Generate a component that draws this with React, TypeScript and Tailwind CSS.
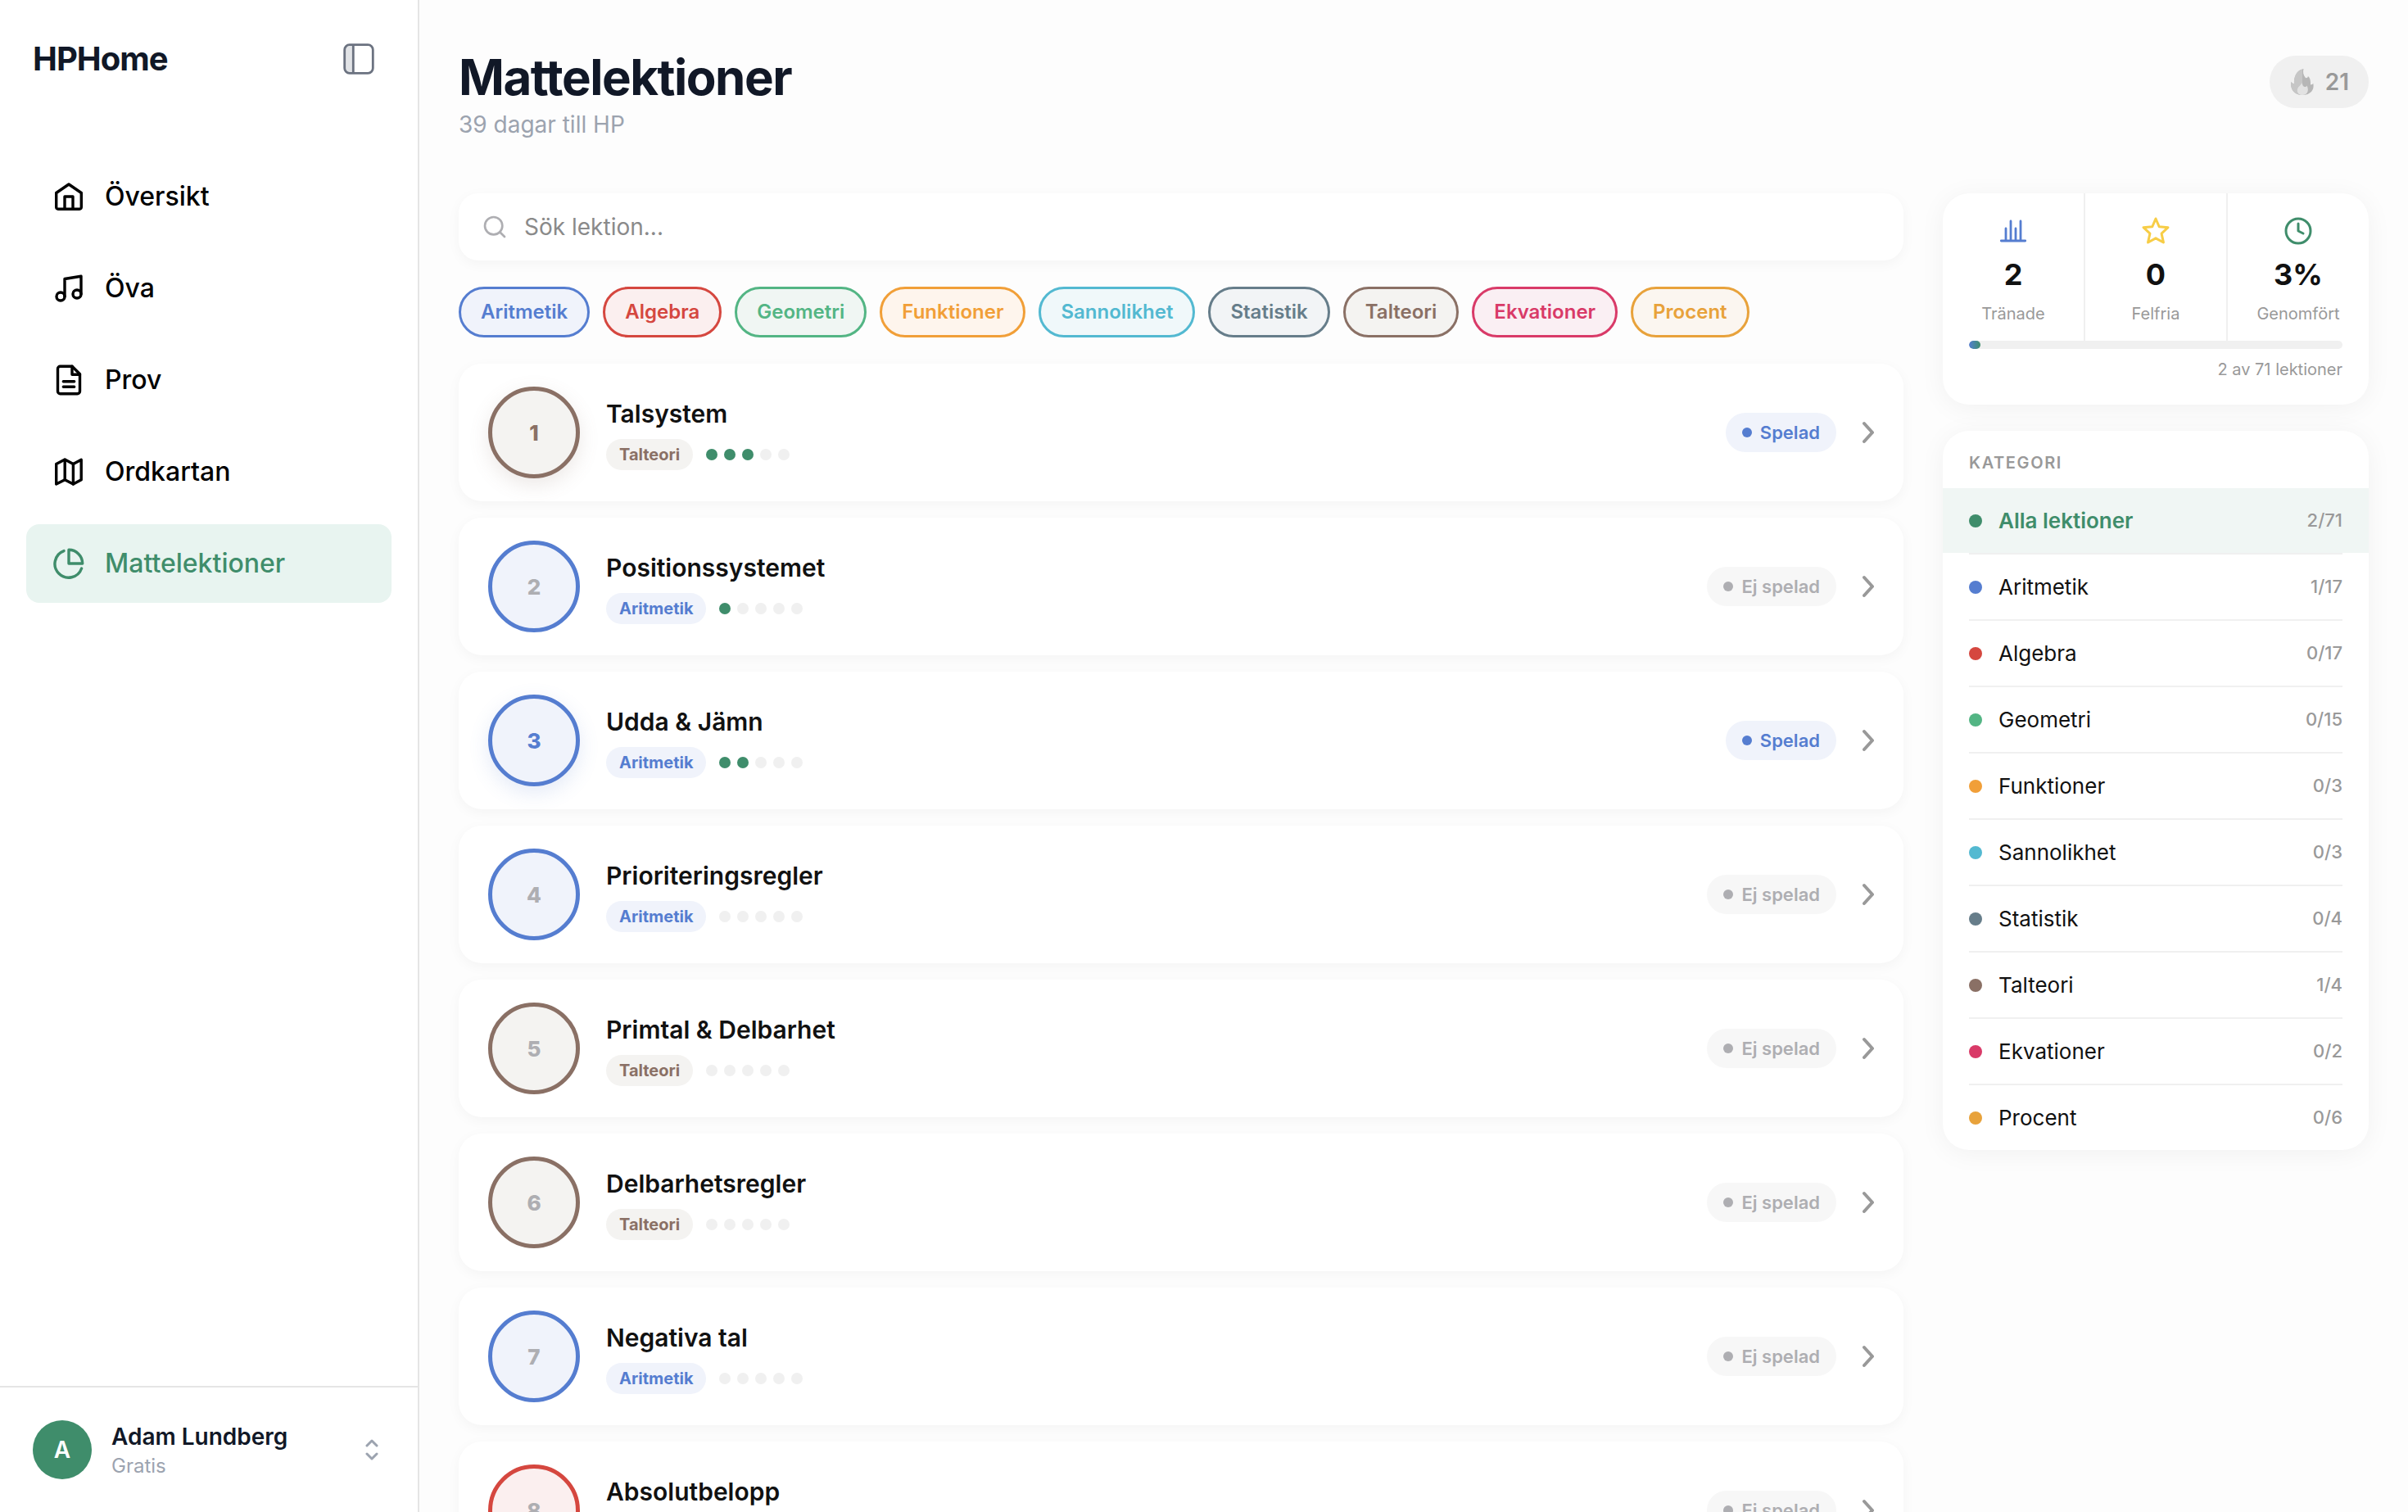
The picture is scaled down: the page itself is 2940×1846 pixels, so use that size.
import { ReactNode, useState } from 'react';
import { clsx } from 'clsx';
import { Clock, Search } from 'lucide-react';

const categoryStyles = {
  Aritmetik: {
    text: 'text-[#557dd0]',
    border: 'border-[#557dd0]',
    soft: 'bg-[#f0f3fb]',
    dot: 'bg-[#557dd0]',
    glow: 'shadow-[0_8px_24px_rgba(85,125,208,0.16)]',
  },
  Algebra: {
    text: 'text-[#d5473f]',
    border: 'border-[#d5473f]',
    soft: 'bg-[#fbefef]',
    dot: 'bg-[#d5473f]',
    glow: 'shadow-[0_8px_24px_rgba(213,71,63,0.16)]',
  },
  Geometri: {
    text: 'text-[#53b584]',
    border: 'border-[#53b584]',
    soft: 'bg-[#f0f6f3]',
    dot: 'bg-[#53b584]',
    glow: 'shadow-[0_8px_24px_rgba(83,181,132,0.16)]',
  },
  Funktioner: {
    text: 'text-[#f19f38]',
    border: 'border-[#f19f38]',
    soft: 'bg-[#fef5ed]',
    dot: 'bg-[#f19f38]',
    glow: 'shadow-[0_8px_24px_rgba(241,159,56,0.16)]',
  },
  Sannolikhet: {
    text: 'text-[#53b9d1]',
    border: 'border-[#53b9d1]',
    soft: 'bg-[#f0f8fa]',
    dot: 'bg-[#53b9d1]',
    glow: 'shadow-[0_8px_24px_rgba(83,185,209,0.16)]',
  },
  Statistik: {
    text: 'text-[#667d8a]',
    border: 'border-[#667d8a]',
    soft: 'bg-[#f2f4f6]',
    dot: 'bg-[#667d8a]',
    glow: 'shadow-[0_8px_24px_rgba(102,125,138,0.16)]',
  },
  Talteori: {
    text: 'text-[#8a7065]',
    border: 'border-[#8a7065]',
    soft: 'bg-[#f4f3f1]',
    dot: 'bg-[#8a7065]',
    glow: 'shadow-[0_8px_24px_rgba(138,112,101,0.16)]',
  },
  Ekvationer: {
    text: 'text-[#d93a68]',
    border: 'border-[#d93a68]',
    soft: 'bg-[#faeff3]',
    dot: 'bg-[#d93a68]',
    glow: 'shadow-[0_8px_24px_rgba(217,58,104,0.16)]',
  },
  Procent: {
    text: 'text-[#e8a23b]',
    border: 'border-[#e8a23b]',
    soft: 'bg-[#fbf6f0]',
    dot: 'bg-[#e8a23b]',
    glow: 'shadow-[0_8px_24px_rgba(232,162,59,0.16)]',
  },
};

type Category = keyof typeof categoryStyles;

const categories = Object.keys(categoryStyles) as Category[];

const counts: Record<Category, string> = {
  Aritmetik: '1/17',
  Algebra: '0/17',
  Geometri: '0/15',
  Funktioner: '0/3',
  Sannolikhet: '0/3',
  Statistik: '0/4',
  Talteori: '1/4',
  Ekvationer: '0/2',
  Procent: '0/6',
};

interface Lesson {
  id: number;
  title: string;
  category: Category;
  level: number;
  played: boolean;
}

const lessons: Lesson[] = [
  { id: 1, title: 'Talsystem', category: 'Talteori', level: 3, played: true },
  { id: 2, title: 'Positionssystemet', category: 'Aritmetik', level: 1, played: false },
  { id: 3, title: 'Udda & Jämn', category: 'Aritmetik', level: 2, played: true },
  { id: 4, title: 'Prioriteringsregler', category: 'Aritmetik', level: 0, played: false },
  { id: 5, title: 'Primtal & Delbarhet', category: 'Talteori', level: 0, played: false },
  { id: 6, title: 'Delbarhetsregler', category: 'Talteori', level: 0, played: false },
  { id: 7, title: 'Negativa tal', category: 'Aritmetik', level: 0, played: false },
  { id: 8, title: 'Absolutbelopp', category: 'Algebra', level: 0, played: false },
];

const NavIcon = ({ children }: { children: ReactNode }) => (
  <svg
    className="size-10"
    viewBox="0 0 40 40"
    fill="none"
    stroke="currentColor"
    strokeWidth="3.4"
    strokeLinecap="round"
    strokeLinejoin="round"
    aria-hidden="true"
  >
    {children}
  </svg>
);

const navItems = [
  {
    label: 'Översikt',
    icon: (
      <NavIcon>
        <path d="M4.7 15.5 20 5l15.3 10.5V33a2.2 2.2 0 0 1-2.2 2.2H6.9A2.2 2.2 0 0 1 4.7 33z" />
        <path d="M15 35V20h10v15" />
      </NavIcon>
    ),
  },
  {
    label: 'Öva',
    icon: (
      <NavIcon>
        <path d="M15 30V8.5l20-3.2V27" />
        <circle cx="10" cy="30" r="5" />
        <circle cx="30" cy="27" r="5" />
      </NavIcon>
    ),
  },
  {
    label: 'Prov',
    icon: (
      <NavIcon>
        <path d="M24 3.3H9.5a3 3 0 0 0-3 3v27.4a3 3 0 0 0 3 3h21a3 3 0 0 0 3-3V12.8z" />
        <path d="M24 3.3v10h9.5" />
        <path d="M13.3 21.7h13.4M13.3 28.3h13.4" />
      </NavIcon>
    ),
  },
  {
    label: 'Ordkartan',
    icon: (
      <NavIcon>
        <path d="m4.7 10.5 10.5-5.4 10.2 5.4 9.8-5.2v24.4l-9.8 5.3-10.2-5.3-10.5 5.3z" />
        <path d="M15.2 5.2v24.5M25.4 10.5V35" />
      </NavIcon>
    ),
  },
  {
    label: 'Mattelektioner',
    icon: (
      <NavIcon>
        <path d="M14 4.6A16.8 16.8 0 1 0 35.6 26" />
        <path d="M36.7 20A16.7 16.7 0 0 0 20 3.3V20z" />
      </NavIcon>
    ),
  },
];

const PanelIcon = () => (
  <svg className="size-10" viewBox="0 0 40 40" fill="none" stroke="currentColor" strokeWidth="2.8" aria-hidden="true">
    <path d="M14 3H8.500A6 6 0 0 0 3 9v22a6 6 0 0 0 5.500 6H14z" fill="currentColor" fillOpacity="0.2" stroke="none" />
    <rect x="2.700" y="2.700" width="34.600" height="34.600" rx="6" />
    <path d="M13.300 2.700v34.600" />
  </svg>
);

const FlameIcon = () => (
  <svg className="size-8" viewBox="0 0 32 32" aria-hidden="true">
    <path
      d="M17.500 0c-1 4-.5 7 2 10.500 1.200 1.600 3 .5 3.500-1.500 2.500 2 3.300 6 3 10.500 1.500 0 2.500-.8 3.300-1.700C31 26 26 32 16 32 6 32 1 25 2.300 15.800c.8 1.500 2 2.400 3.700 2.700C5.500 10 9 1.500 17.500 0z"
      fill="#b6b6b6"
    />
    <path d="M16 .6V32C6 32 1 25 2.300 15.800c.8 1.500 2 2.400 3.700 2.700C5.500 10 8.500 2.500 16 .6z" fill="#c6c6c6" />
    <path d="M15.500 17c.5 3 2 5 3.500 5s2-.5 2.500-1.500c2.500 4.500 2 11.500-5.500 11.500s-7.500-8-3.500-11c1.500-1.200 2.500-2.500 3-4z" fill="#e2e2e2" />
  </svg>
);

const BarsIcon = () => (
  <svg
    className="size-9 text-[#557dd0]"
    viewBox="0 0 36 36"
    fill="none"
    stroke="currentColor"
    strokeWidth="2.8"
    strokeLinecap="round"
    aria-hidden="true"
  >
    <path d="M3.300 30h29.400M9 30V15M15 30V6M21 30V15M27 30V6" />
  </svg>
);

const StarIcon = () => (
  <svg
    className="size-9 text-[#f7cd46]"
    viewBox="0 0 24 24"
    fill="none"
    stroke="currentColor"
    strokeWidth="2"
    strokeLinecap="round"
    strokeLinejoin="round"
    aria-hidden="true"
  >
    <path d="m12 2 2.800 6.500 7.200.6-5.300 5 1.600 7.200L12 17.900l-6.300 3.400 1.600-7.200-5.300-5 7.200-.6z" />
  </svg>
);

const Sidebar = () => (
  <aside className="flex w-[512px] shrink-0 flex-col border-r-2 border-[#e5e5e5] bg-white">
    <div className="flex items-center justify-between p-10">
      <span className="text-[40px] leading-[64px] font-bold tracking-tight text-[#111827]">HPHome</span>
      <button type="button" aria-label="Dölj sidomeny" className="p-3 text-[#6b7280]">
        <PanelIcon />
      </button>
    </div>
    <nav className="mt-12 flex flex-1 flex-col gap-4 px-8">
      {navItems.map(({ label, icon }) => {
        const active = label === 'Mattelektioner';
        return (
          <a
            key={label}
            href="#"
            aria-current={active ? 'page' : undefined}
            className={clsx(
              'flex h-24 items-center gap-6 rounded-2xl px-8 text-[32px] font-medium',
              active ? 'bg-[#e8f4f0] text-[#3f8d6b]' : 'text-black',
            )}
          >
            {icon}
            {label}
          </a>
        );
      })}
    </nav>
    <button type="button" className="flex items-center gap-6 border-t-2 border-[#e5e5e5] p-10 text-left">
      <span className="flex size-18 items-center justify-center rounded-full bg-[#3f8d6b] text-[28px] font-semibold text-white">
        A
      </span>
      <span className="flex flex-1 flex-col">
        <span className="text-[28px] leading-10 font-semibold text-[#111827]">Adam Lundberg</span>
        <span className="text-2xl leading-8 text-[#9ca3af]">Gratis</span>
      </span>
      <svg
        className="size-8 text-[#9ca3af]"
        viewBox="0 0 32 32"
        fill="none"
        stroke="currentColor"
        strokeWidth="3"
        strokeLinecap="round"
        strokeLinejoin="round"
        aria-hidden="true"
      >
        <path d="m10 11 6-6 6 6M10 21l6 6 6-6" />
      </svg>
    </button>
  </aside>
);

const LessonCard = ({ lesson }: { lesson: Lesson }) => {
  const style = categoryStyles[lesson.category];

  return (
    <li>
      <button
        type="button"
        className="flex w-full items-center gap-8 rounded-[28px] bg-white px-9 py-7 text-left shadow-[0_4px_16px_rgba(0,0,0,0.04)]"
      >
        <span
          className={clsx(
            'flex size-28 shrink-0 items-center justify-center rounded-full border-5 text-[26px] font-extrabold',
            style.border,
            style.soft,
            lesson.played ? [style.text, style.glow] : 'text-[#aeaeb2]',
          )}
        >
          {lesson.id}
        </span>
        <span className="flex flex-1 flex-col items-start gap-2">
          <span className="text-3xl leading-[46px] font-semibold text-[#111111]">{lesson.title}</span>
          <span className="flex items-center gap-4">
            <span className={clsx('rounded-full px-4 text-xl leading-[38px] font-bold', style.soft, style.text)}>
              {lesson.category}
            </span>
            <span className="flex gap-2">
              {[1, 2, 3, 4, 5].map((n) => (
                <span
                  key={n}
                  className={clsx('size-3.5 rounded-full', n <= lesson.level ? 'bg-[#3f8d6b]' : 'bg-[#f0f0f0]')}
                />
              ))}
            </span>
          </span>
        </span>
        <span
          className={clsx(
            'flex h-12 items-center gap-2.5 rounded-full px-5 text-[22px] font-semibold',
            lesson.played ? 'bg-[#f0f3fb] text-[#557dd0]' : 'bg-[#f7f7f7] text-[#aeaeb2]',
          )}
        >
          <span className="size-3 rounded-full bg-current" />
          {lesson.played ? 'Spelad' : 'Ej spelad'}
        </span>
        <svg
          className="h-7 w-3.5 text-[#999999]"
          viewBox="0 0 14 28"
          fill="none"
          stroke="currentColor"
          strokeWidth="4"
          strokeLinecap="round"
          strokeLinejoin="round"
          aria-hidden="true"
        >
          <path d="m2 3 10 11L2 25" />
        </svg>
      </button>
    </li>
  );
};

const Stat = ({ icon, value, label }: { icon: ReactNode; value: string; label: string }) => (
  <div className="flex flex-col items-center gap-3 bg-white pt-7 pb-5">
    {icon}
    <span className="text-4xl leading-[46px] font-bold text-[#111111]">{value}</span>
    <span className="text-xl leading-[26px] text-[#999999]">{label}</span>
  </div>
);

const CategoryRow = ({ name, count, dot, active }: { name: string; count: string; dot: string; active?: boolean }) => (
  <li className="group">
    <button
      type="button"
      className={clsx('flex h-[79px] w-full items-center gap-5 px-8 text-left', active && 'bg-[#f0f6f4]')}
    >
      <span className={clsx('size-4 rounded-full', dot)} />
      <span className={clsx('flex-1 text-[26px]', active ? 'font-semibold text-[#3f8d6b]' : 'text-[#111111]')}>
        {name}
      </span>
      <span className="text-[22px] font-medium text-[#999999]">{count}</span>
    </button>
    <div className="mx-8 h-0.5 bg-[#f0f0f0] group-last:hidden" />
  </li>
);

export default function App() {
  const [query, setQuery] = useState('');

  return (
    <div className="flex h-screen overflow-hidden bg-[#fdfdfd] font-[Inter,sans-serif]">
      <Sidebar />
      <main className="min-w-0 flex-1 overflow-y-auto px-12 pt-[58px] [scrollbar-width:none]">
        <header className="flex items-start justify-between">
          <div>
            <h1 className="text-6xl leading-[72px] font-bold tracking-tight text-[#111827]">Mattelektioner</h1>
            <p className="text-[28px] leading-11 text-[#9ca3af]">39 dagar till HP</p>
          </div>
          <div className="mt-2.5 flex h-16 items-center gap-3 rounded-full bg-[#f0f0f0] px-6 text-[28px] font-semibold text-[#999999]">
            <FlameIcon />
            21
          </div>
        </header>

        <div className="mt-[62px] flex items-start gap-12">
          <section className="flex min-w-0 flex-1 flex-col gap-8">
            <label className="flex h-[82px] items-center gap-5 rounded-3xl bg-white px-7 shadow-[0_4px_16px_rgba(0,0,0,0.04)]">
              <Search className="size-8 text-[#aeaeb2]" />
              <input
                type="text"
                value={query}
                onChange={(e) => setQuery(e.target.value)}
                placeholder="Sök lektion..."
                aria-label="Sök lektion"
                className="flex-1 bg-transparent text-[28px] outline-none placeholder:text-[#8a8a8a]"
              />
            </label>

            <div className="flex flex-wrap gap-4">
              {categories.map((name) => {
                const style = categoryStyles[name];
                return (
                  <button
                    key={name}
                    type="button"
                    className={clsx(
                      'h-[62px] rounded-full border-3 px-6 text-2xl font-semibold',
                      style.border,
                      style.soft,
                      style.text,
                    )}
                  >
                    {name}
                  </button>
                );
              })}
            </div>

            <ul className="flex flex-col gap-5">
              {lessons
                .filter((lesson) => lesson.title.toLowerCase().includes(query.toLowerCase()))
                .map((lesson) => (
                  <LessonCard key={lesson.id} lesson={lesson} />
                ))}
            </ul>
          </section>

          <aside className="flex w-[520px] shrink-0 flex-col gap-8">
            <section className="overflow-hidden rounded-4xl bg-white shadow-[0_4px_32px_rgba(0,0,0,0.05)]">
              <div className="grid grid-cols-3 gap-0.5 bg-[#f0f0f0]">
                <Stat icon={<BarsIcon />} value="2" label="Tränade" />
                <Stat icon={<StarIcon />} value="0" label="Felfria" />
                <Stat icon={<Clock className="size-9 text-[#3f8d6b]" />} value="3%" label="Genomfört" />
              </div>
              <div className="px-8 pb-[30px]">
                <div className="h-2.5 overflow-hidden rounded-full bg-[#f0f0f0]">
                  <div className="h-full w-[3%] rounded-full bg-linear-to-r from-[#557dd0] to-[#3f8d6b]" />
                </div>
                <p className="mt-3 text-right text-xl leading-[26px] text-[#999999]">2 av 71 lektioner</p>
              </div>
            </section>

            <section className="overflow-hidden rounded-4xl bg-white shadow-[0_4px_32px_rgba(0,0,0,0.05)]">
              <h2 className="px-8 pt-[26px] pb-[18px] text-xl leading-[26px] font-semibold tracking-[0.08em] text-[#999999] uppercase">
                Kategori
              </h2>
              <ul>
                <CategoryRow name="Alla lektioner" count="2/71" dot="bg-[#3f8d6b]" active />
                {categories.map((name) => (
                  <CategoryRow key={name} name={name} count={counts[name]} dot={categoryStyles[name].dot} />
                ))}
              </ul>
            </section>
          </aside>
        </div>
      </main>
    </div>
  );
}
